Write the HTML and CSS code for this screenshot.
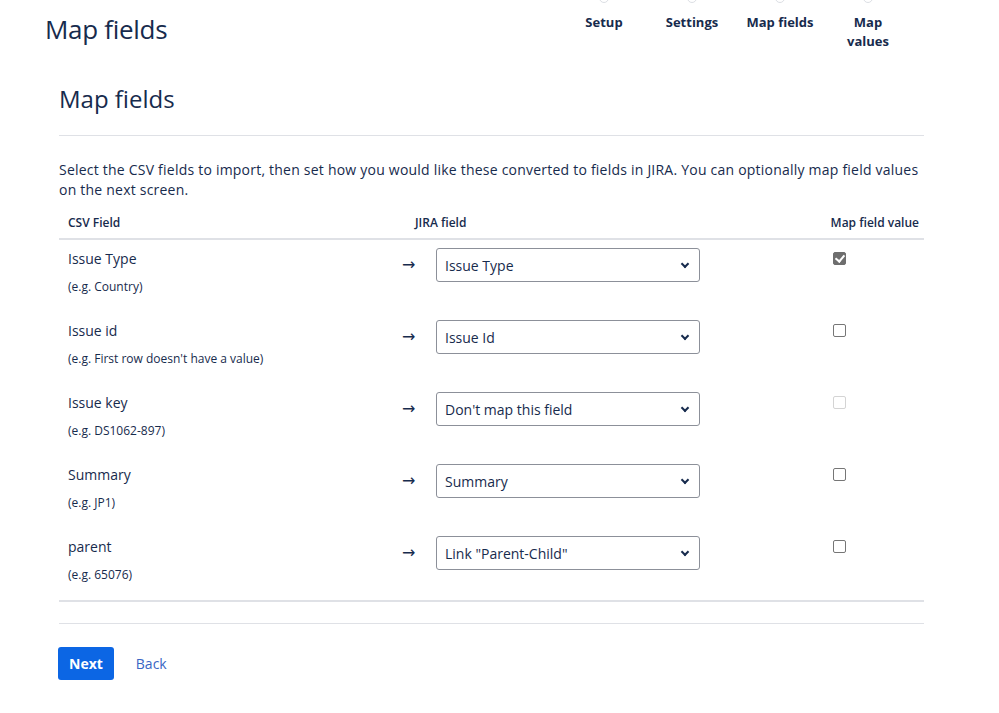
FILE: index.html
```html
<!DOCTYPE html>
<html lang="en">
<head>
    <meta charset="UTF-8">
    <title>Map fields</title>
    <link rel="stylesheet" href="styles.css">
</head>
<body>
    <header class="page-header">
        <h1>Map fields</h1>
        <ol class="steps">
            <li class="step done">Setup</li>
            <li class="step done">Settings</li>
            <li class="step current">Map fields</li>
            <li class="step last">Map<br>values</li>
        </ol>
    </header>

    <main class="panel">
        <h2>Map fields</h2>
        <p class="intro">Select the CSV fields to import, then set how you would like these converted to fields in JIRA. You can optionally map field values on the next screen.</p>

        <div class="mapping">
            <div class="mapping-head">
                <div class="col-csv">CSV Field</div>
                <div class="col-jira">JIRA field</div>
                <div class="col-value">Map field value</div>
            </div>

            <div class="mapping-row">
                <div class="col-csv">
                    <div class="field-name">Issue Type</div>
                    <div class="field-example">(e.g. Country)</div>
                </div>
                <div class="col-jira">
                    <span class="arrow">&rarr;</span>
                    <div class="select"><span>Issue Type</span><span class="chevron"></span></div>
                </div>
                <div class="col-value"><span class="check checked"></span></div>
            </div>

            <div class="mapping-row">
                <div class="col-csv">
                    <div class="field-name">Issue id</div>
                    <div class="field-example">(e.g. First row doesn't have a value)</div>
                </div>
                <div class="col-jira">
                    <span class="arrow">&rarr;</span>
                    <div class="select"><span>Issue Id</span><span class="chevron"></span></div>
                </div>
                <div class="col-value"><span class="check"></span></div>
            </div>

            <div class="mapping-row">
                <div class="col-csv">
                    <div class="field-name">Issue key</div>
                    <div class="field-example">(e.g. DS1062-897)</div>
                </div>
                <div class="col-jira">
                    <span class="arrow">&rarr;</span>
                    <div class="select"><span>Don't map this field</span><span class="chevron"></span></div>
                </div>
                <div class="col-value"><span class="check disabled"></span></div>
            </div>

            <div class="mapping-row">
                <div class="col-csv">
                    <div class="field-name">Summary</div>
                    <div class="field-example">(e.g. JP1)</div>
                </div>
                <div class="col-jira">
                    <span class="arrow">&rarr;</span>
                    <div class="select"><span>Summary</span><span class="chevron"></span></div>
                </div>
                <div class="col-value"><span class="check"></span></div>
            </div>

            <div class="mapping-row">
                <div class="col-csv">
                    <div class="field-name">parent</div>
                    <div class="field-example">(e.g. 65076)</div>
                </div>
                <div class="col-jira">
                    <span class="arrow">&rarr;</span>
                    <div class="select"><span>Link "Parent-Child"</span><span class="chevron"></span></div>
                </div>
                <div class="col-value"><span class="check"></span></div>
            </div>
        </div>

        <div class="actions">
            <button class="btn-next">Next</button>
            <a href="#" class="link-back">Back</a>
        </div>
    </main>
</body>
</html>
```

FILE: styles.css
```css
body {
    margin: 0;
    font-family: 'Open Sans', 'Noto Sans', sans-serif;
    color: #172b4d;
    background: #fff;
}

.page-header {
    display: flex;
    justify-content: space-between;
    align-items: flex-start;
    padding: 0 87px 0 45px;
    height: 70px;
}

.page-header h1 {
    margin: 11px 0 0;
    font-size: 26px;
    font-weight: 500;
    letter-spacing: -0.3px;
    line-height: 36px;
}

.steps {
    display: flex;
    list-style: none;
    margin: 0;
    padding: 0;
}

.step {
    position: relative;
    width: 88px;
    padding-top: 13px;
    text-align: center;
    font-size: 13px;
    font-weight: 700;
    line-height: 19px;
}

.step::before {
    content: '';
    position: absolute;
    top: -7px;
    left: 39px;
    width: 8px;
    height: 8px;
    border: 1px solid #dcdfe4;
    border-radius: 50%;
    background: #fff;
    z-index: 1;
}

.step::after {
    content: '';
    position: absolute;
    top: -1px;
    left: 44px;
    width: 88px;
    height: 1px;
    background: #e6e8eb;
}

.step.current::after,
.step.last::after {
    display: none;
}

.panel {
    margin: 0 75px 0 59px;
}

.panel h2 {
    margin: 13px 0 0;
    font-size: 24px;
    font-weight: 500;
    line-height: 32px;
    padding-bottom: 20px;
    border-bottom: 1px solid #dfe1e6;
}

.intro {
    margin: 24px 0 0;
    font-size: 14px;
    line-height: 20px;
    letter-spacing: 0.22px;
}

.mapping {
    margin-top: 8px;
    border-bottom: 2px solid #dfe1e6;
}

.mapping-head,
.mapping-row {
    display: grid;
    grid-template-columns: 336px 430px 1fr;
}

.mapping-head {
    padding: 6px 0 6px;
    font-size: 12px;
    font-weight: 600;
    line-height: 18px;
    border-bottom: 2px solid #dfe1e6;
}

.mapping-head .col-csv {
    padding-left: 9px;
}

.mapping-head .col-jira {
    padding-left: 20px;
}

.mapping-head .col-value {
    text-align: right;
    padding-right: 5px;
}

.mapping-row {
    height: 72px;
}

.mapping-row .col-csv {
    padding: 8px 0 0 9px;
}

.field-name {
    font-size: 14px;
    line-height: 22px;
}

.field-example {
    margin-top: 8px;
    font-size: 12px;
    line-height: 18px;
}

.mapping-row .col-jira {
    display: flex;
    align-items: flex-start;
    padding-top: 8px;
}

.arrow {
    width: 41px;
    box-sizing: border-box;
    padding-left: 7px;
    font-family: 'DejaVu Sans', sans-serif;
    font-size: 16px;
    line-height: 34px;
}

.select {
    display: flex;
    justify-content: space-between;
    align-items: center;
    box-sizing: border-box;
    width: 264px;
    height: 34px;
    padding: 0 11px 0 8px;
    border: 1px solid #8c9099;
    border-radius: 3px;
    font-size: 14px;
}

.chevron {
    width: 4px;
    height: 4px;
    border-right: 2px solid #172b4d;
    border-bottom: 2px solid #172b4d;
    transform: rotate(45deg);
    margin-top: -3px;
}

.mapping-row .col-value {
    padding: 12px 0 0 8px;
}

.check {
    display: block;
    position: relative;
    box-sizing: border-box;
    width: 13px;
    height: 13px;
    border: 1px solid #767676;
    border-radius: 2px;
    background: #fff;
}

.check.checked {
    border-color: #6e6e6e;
    background: #6e6e6e;
}

.check.checked::after {
    content: '';
    position: absolute;
    left: 3px;
    top: 0;
    width: 4px;
    height: 7px;
    border-right: 2px solid #fff;
    border-bottom: 2px solid #fff;
    transform: rotate(40deg);
}

.check.disabled {
    border-color: #d4d4d4;
}

.actions {
    display: flex;
    align-items: center;
    gap: 22px;
    margin-top: 21px;
    padding-top: 23px;
    border-top: 1px solid #dfe1e6;
}

.btn-next {
    height: 33px;
    padding: 0 11px;
    margin-left: -1px;
    border: none;
    border-radius: 3px;
    background: #0c66e4;
    color: #fff;
    font-family: inherit;
    font-size: 14px;
    font-weight: 700;
}

.link-back {
    font-size: 14px;
    color: #3a66c4;
    text-decoration: none;
}
```
